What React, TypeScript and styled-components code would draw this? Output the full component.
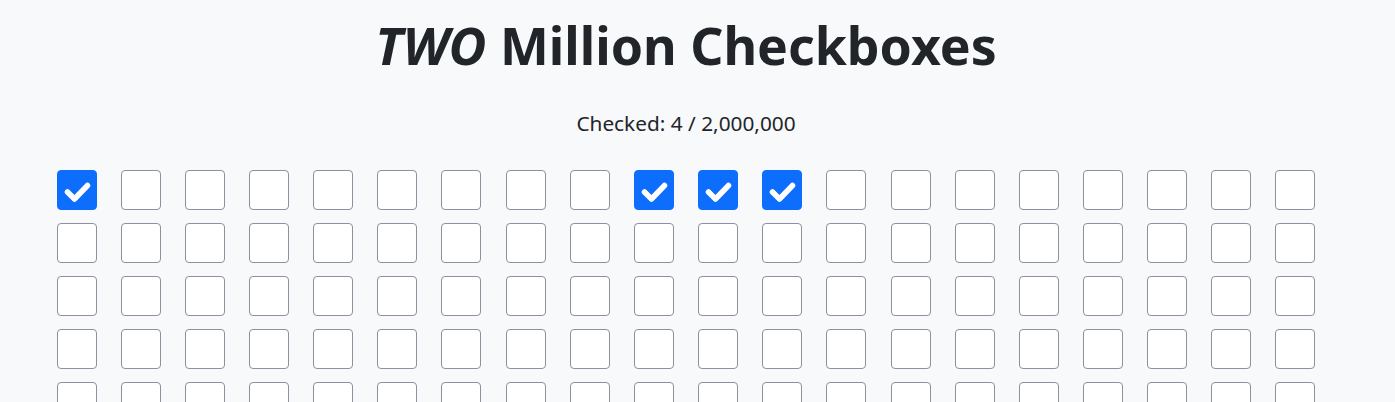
import React from 'react';
import styled, { createGlobalStyle } from 'styled-components';

const COLS = 20;
const ROWS = 6;
const TOTAL = 2000000;

const GlobalStyle = createGlobalStyle`
  body {
    margin: 0;
    background-color: #f8f9fa;
    color: #212529;
    font-family: 'Noto Sans', 'Open Sans', sans-serif;
  }
`;

// the reference leaves a scrollbar gutter on the right
const Page = styled.div`
  display: flex;
  flex-direction: column;
  align-items: center;
  height: 402px;
  padding-right: 23px;
  overflow: hidden;
`;

const Title = styled.h1`
  margin: 14px 0 0;
  font-size: 51.8px;
  font-weight: 700;
  line-height: 1.2;
  em {
    font-style: italic;
  }
`;

const Counter = styled.p`
  margin: 32px 0 0;
  font-size: 20.8px;
  line-height: 1.5;
`;

const Grid = styled.div`
  display: grid;
  grid-template-columns: repeat(${COLS}, 40px);
  column-gap: 24.16px;
  row-gap: 13px;
  margin-top: 31px;
`;

const Box = styled.button<{ $checked: boolean }>`
  box-sizing: border-box;
  width: 40px;
  height: 40px;
  padding: 0;
  border-radius: 4px;
  border: 1px solid ${(p) => (p.$checked ? '#0d6efd' : '#8f8f9d')};
  background-color: ${(p) => (p.$checked ? '#0d6efd' : '#ffffff')};
  cursor: pointer;
  display: flex;
  align-items: center;
  justify-content: center;
  svg {
    display: block;
    flex-shrink: 0;
  }
`;

const Check = () => (
  <svg width="38" height="38" viewBox="1 1 38 38">
    <path
      d="M10.5 22l7 7 13-13.5"
      fill="none"
      stroke="#fff"
      strokeWidth="5.5"
      strokeLinecap="round"
      strokeLinejoin="round"
    />
  </svg>
);

const App: React.FC = () => {
  const [checked, setChecked] = React.useState<Set<number>>(() => new Set([0, 9, 10, 11]));

  const toggle = (index: number) => {
    setChecked((prev) => {
      const next = new Set(prev);
      if (next.has(index)) {
        next.delete(index);
      } else {
        next.add(index);
      }
      return next;
    });
  };

  return (
    <Page>
      <GlobalStyle />
      <Title>
        <em>TWO</em> Million Checkboxes
      </Title>
      <Counter>
        Checked: {checked.size.toLocaleString('en-US')} / {TOTAL.toLocaleString('en-US')}
      </Counter>
      <Grid>
        {Array.from({ length: COLS * ROWS }, (_, index) => (
          <Box
            key={index}
            $checked={checked.has(index)}
            onClick={() => toggle(index)}
            aria-label={`checkbox ${index + 1}`}>
            {checked.has(index) ? <Check /> : null}
          </Box>
        ))}
      </Grid>
    </Page>
  );
};

export default App;
